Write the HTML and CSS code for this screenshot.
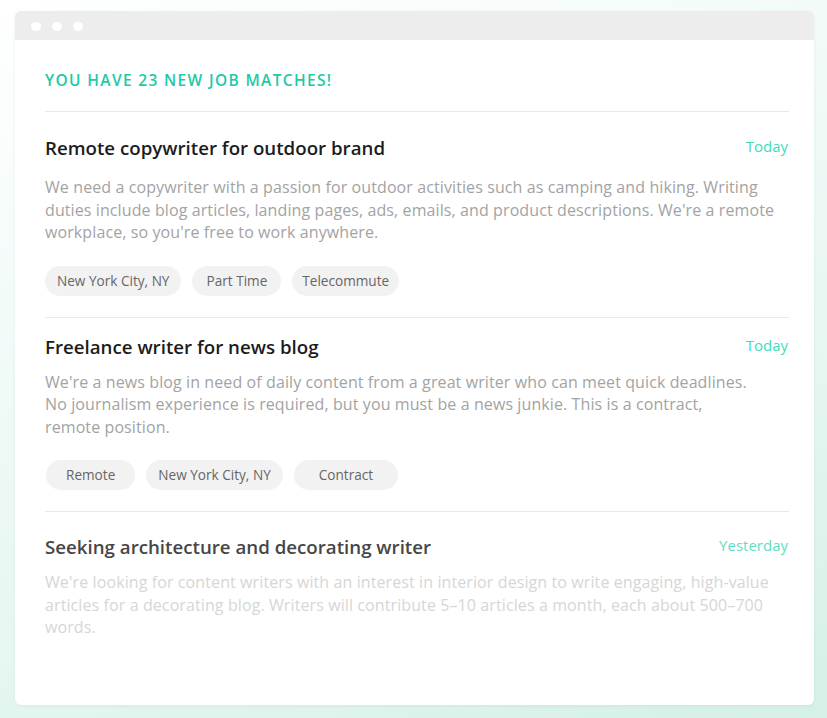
FILE: index.html
```html
<!DOCTYPE html>
<html>
<head>
<meta charset="utf-8">
<link rel="stylesheet" href="styles.css">
</head>
<body>
<div class="window">
  <div class="titlebar">
    <span class="dot"></span><span class="dot"></span><span class="dot"></span>
  </div>
  <div class="content">
    <h1 class="heading">You have 23 new job matches!</h1>
    <div class="job job--first">
      <div class="job-head">
        <h2 class="job-title">Remote copywriter for outdoor brand</h2>
        <span class="job-date">Today</span>
      </div>
      <p class="job-desc">We need a copywriter with a passion for outdoor activities such as camping and hiking. Writing duties include blog articles, landing pages, ads, emails, and product descriptions. We're a remote workplace, so you're free to work anywhere.</p>
      <div class="tags">
        <span class="tag tag--p12">New York City, NY</span>
        <span class="tag tag--p15">Part Time</span>
        <span class="tag tag--p10">Telecommute</span>
      </div>
    </div>
    <div class="job job--second">
      <div class="job-head">
        <h2 class="job-title">Freelance writer for news blog</h2>
        <span class="job-date">Today</span>
      </div>
      <p class="job-desc">We're a news blog in need of daily content from a great writer who can meet quick deadlines.<br>No journalism experience is required, but you must be a news junkie. This is a contract,<br>remote position.</p>
      <div class="tags">
        <span class="tag tag--p20">Remote</span>
        <span class="tag tag--p12">New York City, NY</span>
        <span class="tag tag--p25">Contract</span>
      </div>
    </div>
    <div class="job job--third job--faded">
      <div class="job-head">
        <h2 class="job-title">Seeking architecture and decorating writer</h2>
        <span class="job-date">Yesterday</span>
      </div>
      <p class="job-desc">We're looking for content writers with an interest in interior design to write engaging, high-value articles for a decorating blog. Writers will contribute 5–10 articles a month, each about 500–700 words.</p>
    </div>
  </div>
</div>
</body>
</html>
```
FILE: styles.css
```css
* { box-sizing: border-box; }
html, body { margin: 0; padding: 0; }
body {
  width: 827px;
  height: 718px;
  overflow: hidden;
  font-family: "Open Sans", "Liberation Sans", sans-serif;
  background: linear-gradient(160deg, #ffffff 0%, #f3fbf9 30%, #e6f6f1 65%, #d4f0e7 100%);
  padding: 11px 13px 0 15px;
}
.window {
  width: 799px;
  height: 694px;
  background: #fff;
  border-radius: 6px;
  overflow: hidden;
  box-shadow: 0 1px 4px rgba(0, 60, 40, 0.06);
}
.titlebar {
  height: 29px;
  background: #ededed;
  display: flex;
  align-items: center;
  gap: 11px;
  padding: 1px 0 0 16px;
}
.dot {
  width: 10px;
  height: 9px;
  border-radius: 50%;
  background: #fff;
}
.content {
  padding: 30px 25px 0 30px;
}
.heading {
  margin: 0;
  font-size: 15.5px;
  line-height: 20px;
  font-weight: 600;
  letter-spacing: 1.35px;
  text-transform: uppercase;
  color: #1ec9a8;
  padding-bottom: 21px;
}
.job {
  border-top: 1px solid #e9e9e9;
  padding: 17px 0 21px;
}
.job--first { padding-top: 24px; }
.job--third { padding-top: 23px; }
.job-head {
  display: flex;
  justify-content: space-between;
  align-items: center;
}
.job-title {
  margin: 0;
  font-size: 18.7px;
  line-height: 24px;
  font-weight: 600;
  color: #1c1c1c;
}
.job-date {
  font-size: 15px;
  color: #3ddcbc;
  padding-right: 1px;
  margin-bottom: 4px;
}
.job-desc {
  margin: 12px 0 0;
  font-size: 16px;
  line-height: 22.5px;
  letter-spacing: 0.1px;
  color: #a3a3a3;
}
.job--first .job-desc { margin-top: 16px; }
.tags {
  display: flex;
  gap: 11px;
  margin-top: 22px;
}
.tag {
  height: 30px;
  line-height: 30px;
  border-radius: 15px;
  background: #f2f2f2;
  color: #666;
  font-size: 13.6px;
}
.tag--p10 { padding: 0 10px; }
.tag--p12 { padding: 0 12px; }
.tag--p15 { padding: 0 14px; }
.tag--p20 { padding: 0 20px; }
.tag--p25 { padding: 0 25px; }
.job--second .tags .tag:first-child { margin-left: 1px; }
.job--faded .job-title { color: #464646; }
.job--faded .job-date { color: #62dcc4; }
.job--faded .job-desc { color: #d6d6d6; }
```
